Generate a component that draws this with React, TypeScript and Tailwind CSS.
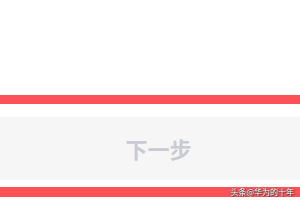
export default function App() {
  return (
    <div className="w-[300px] h-[200px] bg-white flex flex-col overflow-hidden" style={{ fontFamily: '"Noto Sans CJK SC", "Noto Sans", sans-serif' }}>
      <div className="h-[95px] bg-white" />
      <div className="h-[9px] bg-[#fb5157]" />
      <div className="h-[13px] bg-white" />
      <div className="h-[63px] bg-[#f6f6f7] flex items-center justify-center pl-[17px]">
        <span className="text-[22px] font-bold text-[#c8cbd3] tracking-[0px]">下一步</span>
      </div>
      <div className="h-[7px] bg-white" />
      <div className="h-[10px] bg-[#fb5157] flex items-center justify-end pr-[6px]">
        <span className="text-[8px] leading-none text-white [text-shadow:0_0_1px_#222,1px_1px_1px_#444]">头条@华为的十年</span>
      </div>
      <div className="flex-1 bg-white" />
    </div>
  );
}
